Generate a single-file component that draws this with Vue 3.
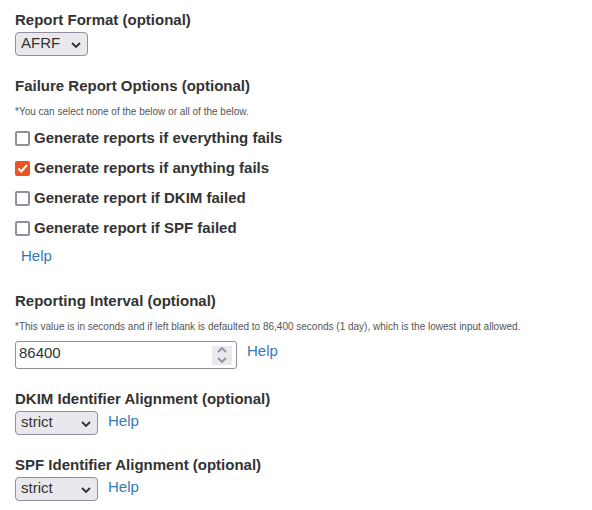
<script setup>
import { ref } from 'vue'

const format = ref('AFRF')
const interval = ref(86400)
const options = ref([
  { id: 'fo-all', label: 'Generate reports if everything fails', checked: false },
  { id: 'fo-any', label: 'Generate reports if anything fails', checked: true },
  { id: 'fo-dkim', label: 'Generate report if DKIM failed', checked: false },
  { id: 'fo-spf', label: 'Generate report if SPF failed', checked: false }
])
const alignments = ref([
  { id: 'adkim', label: 'DKIM Identifier Alignment (optional)', value: 'strict' },
  { id: 'aspf', label: 'SPF Identifier Alignment (optional)', value: 'strict' }
])
</script>

<template>
  <form class="form" @submit.prevent>
    <div class="group">
      <label class="title" for="format">Report Format (optional)</label>
      <div class="row">
        <div class="select">
          <select id="format" v-model="format" class="narrow">
            <option>AFRF</option>
            <option>IODEF</option>
          </select>
          <svg class="chevron" viewBox="0 0 10 7"><path d="M1 1l4 4 4-4" /></svg>
        </div>
      </div>
    </div>

    <fieldset class="group options">
      <legend class="title">Failure Report Options (optional)</legend>
      <p class="note">*You can select none of the below or all of the below.</p>
      <div class="checks">
        <label v-for="o in options" :key="o.id" class="check" :for="o.id">
          <input :id="o.id" v-model="o.checked" type="checkbox" />
          <svg class="tick" viewBox="0 0 15 15"><path d="M3.300 7.500l3 3L12 4" /></svg>
          <span>{{ o.label }}</span>
        </label>
      </div>
      <a class="help indented" href="#options">Help</a>
    </fieldset>

    <div class="group">
      <label class="title" for="interval">Reporting Interval (optional)</label>
      <p class="note">*This value is in seconds and if left blank is defaulted to 86,400 seconds (1 day), which is the lowest input allowed.</p>
      <div class="row">
        <div class="number">
          <input id="interval" v-model="interval" type="number" min="86400" />
          <div class="spinner">
            <button type="button" aria-label="Increase" @click="interval++">
              <svg viewBox="0 0 10 6"><path d="M1 5l4-4 4 4" /></svg>
            </button>
            <button type="button" aria-label="Decrease" @click="interval--">
              <svg viewBox="0 0 10 6"><path d="M1 1l4 4 4-4" /></svg>
            </button>
          </div>
        </div>
        <a class="help" href="#interval">Help</a>
      </div>
    </div>

    <div v-for="a in alignments" :key="a.id" class="group">
      <label class="title" :for="a.id">{{ a.label }}</label>
      <div class="row">
        <div class="select">
          <select :id="a.id" v-model="a.value" class="wide">
            <option>strict</option>
            <option>relaxed</option>
          </select>
          <svg class="chevron" viewBox="0 0 10 7"><path d="M1 1l4 4 4-4" /></svg>
        </div>
        <a class="help" :href="'#' + a.id">Help</a>
      </div>
    </div>
  </form>
</template>

<style>
body {
  margin: 0;
  background: #fff;
}
</style>

<style scoped>
.form {
  display: flex;
  flex-direction: column;
  gap: 20px;
  padding: 10px 15px 0;
  font: 15px/20px "Liberation Sans", Arial, sans-serif;
  color: #333;
}
.group {
  min-width: 0;
  margin: 0;
  padding: 0;
  border: 0;
}
.options {
  margin-bottom: 5px;
}
.title {
  display: block;
  padding: 0;
  margin-bottom: 2px;
  font-weight: bold;
}
.note {
  margin: 0;
  padding: 7px 0;
  font-size: 10px;
  line-height: 14px;
  color: #555;
}
.row {
  display: flex;
  align-items: flex-start;
  gap: 10px;
}
.select {
  position: relative;
}
select {
  display: block;
  appearance: none;
  box-sizing: border-box;
  height: 24px;
  margin: 0;
  padding: 0 5px 2px;
  border: 1px solid #8f8f9d;
  border-radius: 4px;
  background: #e9e9ed;
  font: inherit;
  color: #333;
}
.narrow {
  width: 73px;
}
.wide {
  width: 83px;
}
.chevron {
  position: absolute;
  right: 7px;
  top: 10px;
  width: 10px;
  height: 7px;
  pointer-events: none;
}
svg path {
  fill: none;
  stroke: #2e2e33;
  stroke-width: 1.8;
}
.checks {
  display: flex;
  flex-direction: column;
  align-items: flex-start;
  gap: 10px;
  padding-top: 2px;
}
.check {
  position: relative;
  display: flex;
  align-items: center;
  gap: 4px;
  font-weight: bold;
}
.check input {
  appearance: none;
  box-sizing: border-box;
  width: 15px;
  height: 15px;
  margin: 0;
  border: 2px solid #8f8f9d;
  border-radius: 2px;
  background: #fff;
}
.check input:checked {
  border-color: #e95420;
  background: #e95420;
}
.tick {
  position: absolute;
  left: 0;
  width: 15px;
  height: 15px;
  visibility: hidden;
}
.tick path {
  stroke: #fff;
  stroke-width: 2;
}
.check input:checked + .tick {
  visibility: visible;
}
.help {
  color: #337ab7;
  text-decoration: none;
}
.indented {
  display: block;
  width: max-content;
  margin: 8px 0 0 6px;
}
.number {
  display: flex;
  align-items: center;
  box-sizing: border-box;
  width: 222px;
  height: 28px;
  padding-right: 4px;
  border: 1px solid #8f8f9d;
  border-radius: 3px;
  background: #fff;
}
.number input {
  appearance: textfield;
  flex: 1;
  min-width: 0;
  height: 20px;
  margin: 0 0 4px;
  padding: 0 3px;
  border: 0;
  outline: 0;
  background: none;
  font: inherit;
  color: #333;
}
.number input::-webkit-inner-spin-button {
  appearance: none;
  margin: 0;
}
.spinner {
  display: flex;
  flex-direction: column;
  width: 20px;
  height: 19px;
  background: #e9e9ed;
}
.spinner button {
  display: flex;
  flex: 1;
  align-items: center;
  justify-content: center;
  padding: 0;
  border: 0;
  background: none;
}
.spinner svg {
  width: 10px;
  height: 6px;
}
.spinner path {
  stroke: #8f8f9d;
}
</style>
